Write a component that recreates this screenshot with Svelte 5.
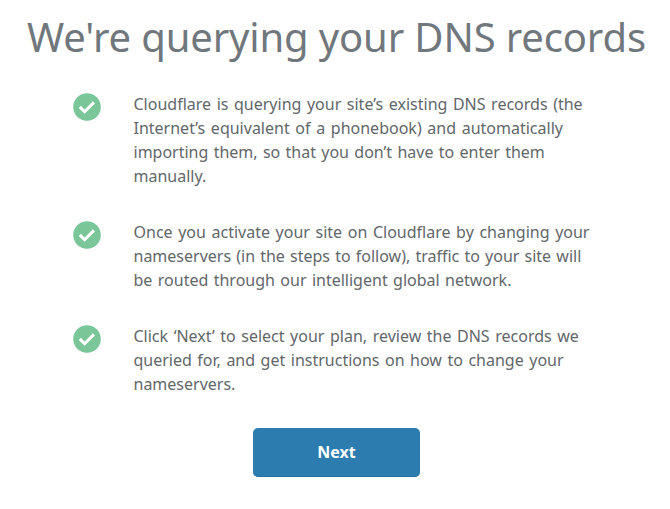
<script>
	const steps = [
		[
			{ text: 'Cloudflare is querying your site’s existing DNS records (the', spacing: 1.4 },
			{ text: 'Internet’s equivalent of a phonebook) and automatically', spacing: 1.5 },
			{ text: 'importing them, so that you don’t have to enter them', spacing: 1.15 },
			{ text: 'manually.', spacing: 0 }
		],
		[
			{ text: 'Once you activate your site on Cloudflare by changing your', spacing: 1.45 },
			{ text: 'nameservers (in the steps to follow), traffic to your site will', spacing: 1 },
			{ text: 'be routed through our intelligent global network.', spacing: 1.25 }
		],
		[
			{ text: 'Click ‘Next’ to select your plan, review the DNS records we', spacing: 1.4 },
			{ text: 'queried for, and get instructions on how to change your', spacing: 1.35 },
			{ text: 'nameservers.', spacing: 0 }
		]
	]
</script>

<main>
	<h1>We're querying your DNS records</h1>

	<ul>
		{#each steps as lines}
			<li>
				<svg viewBox="0 0 28 28" aria-hidden="true">
					<circle cx="14" cy="14" r="13.8" />
					<path d="M6.8 13.9 L11.6 18.7 L20.9 9.4" />
				</svg>
				<p>
					{#each lines as line}
						<span style="word-spacing: {line.spacing}px">{line.text}</span>
					{/each}
				</p>
			</li>
		{/each}
	</ul>

	<button type="button">Next</button>
</main>

<style>
	:global(body) {
		background: #ffffff;
	}

	main {
		display: flex;
		flex-direction: column;
		align-items: center;
		box-sizing: border-box;
		height: 509px;
		padding-top: 7px;
		overflow: hidden;
		font-family: 'Noto Sans', 'Open Sans', sans-serif;
	}

	h1 {
		align-self: flex-start;
		margin: 0 0 0 27px;
		color: #70777d;
		font-size: 40px;
		font-weight: 400;
		line-height: 60px;
		letter-spacing: -0.14px;
		white-space: nowrap;
	}

	ul {
		display: flex;
		flex-direction: column;
		gap: 32px;
		align-self: stretch;
		margin: 25px 0 0;
		padding: 0 0 0 73px;
		list-style: none;
	}

	li {
		display: flex;
		gap: 32.5px;
	}

	svg {
		flex: none;
		width: 28px;
		height: 28px;
		margin-top: 1px;
	}

	circle {
		fill: #7ac698;
	}

	path {
		fill: none;
		stroke: #ffffff;
		stroke-width: 3;
	}

	p {
		margin: 0;
		color: #62676a;
		font-size: 16px;
		line-height: 24px;
	}

	span {
		display: block;
		white-space: nowrap;
	}

	button {
		width: 167px;
		height: 49px;
		margin: 32px 0 0 3px;
		border: 0;
		border-bottom: 1px solid #2a6f9e;
		border-radius: 5px;
		background: #2c7cb0;
		color: #ffffff;
		font: bold 16px 'Noto Sans', sans-serif;
		cursor: pointer;
	}
</style>
